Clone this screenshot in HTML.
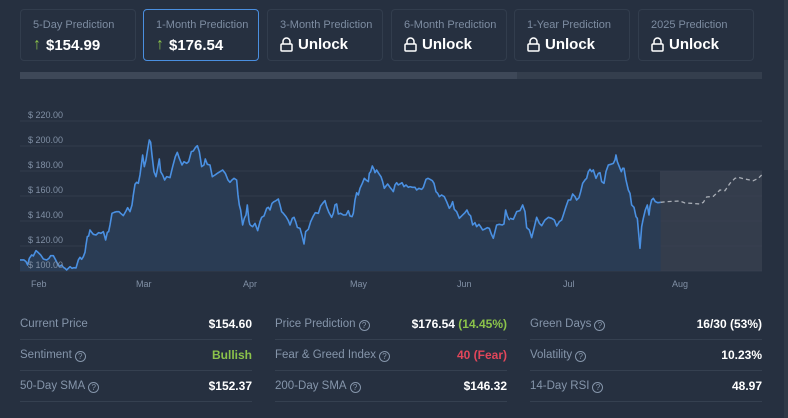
<!DOCTYPE html>
<html><head><meta charset="utf-8"><style>
*{box-sizing:border-box;margin:0;padding:0}
body{width:788px;height:418px;background:#263040;font-family:"Liberation Sans",sans-serif;position:relative;overflow:hidden}
.card{position:absolute;top:9px;width:116px;height:52px;border:1px solid #323d4d;border-radius:4px}
.card.sel{border-color:#4a8fe0}
.card .t{position:absolute;left:12px;top:9px;font-size:11px;color:#7d8ca1}
.card .v{position:absolute;left:12px;top:26px;font-size:15px;font-weight:bold;color:#fff;display:flex;align-items:center;gap:5px}
.ar{color:#8bc34a;font-weight:normal;font-size:16px}
.bar{position:absolute;left:20px;top:72px;width:742px;height:7px;background:#343e4d}
.bar i{position:absolute;left:0;top:0;width:497px;height:7px;background:#3e4858}
.sb{position:absolute;left:784px;top:0;width:4px;height:418px;background:#2f3947}
.sb i{position:absolute;left:0;top:60px;width:4px;height:110px;background:#3a4452}
.row{position:absolute;height:31px;border-bottom:1px solid #354050;font-size:11.5px;color:#8595aa;display:flex;justify-content:space-between;align-items:center}
.row b{color:#fff;font-size:12px}
.q{display:inline-block;width:11px;height:11px;border:1px solid #8595aa;border-radius:50%;font-size:8px;text-align:center;line-height:9px;margin-left:3px;vertical-align:-1px}
</style></head><body>
<div class="card" style="left:20px"><div class="t">5-Day Prediction</div><div class="v"><span class="ar">↑</span>$154.99</div></div>
<div class="card sel" style="left:143px"><div class="t">1-Month Prediction</div><div class="v"><span class="ar">↑</span>$176.54</div></div>
<div class="card" style="left:267px"><div class="t">3-Month Prediction</div><div class="v"><svg width="13" height="15" viewBox="0 0 13 15"><path d="M3 7V4.5a3.5 3.5 0 0 1 7 0V7" fill="none" stroke="#fff" stroke-width="1.5"/><rect x="1" y="7" width="11" height="7" rx="1" fill="none" stroke="#fff" stroke-width="1.5"/></svg>Unlock</div></div>
<div class="card" style="left:391px"><div class="t">6-Month Prediction</div><div class="v"><svg width="13" height="15" viewBox="0 0 13 15"><path d="M3 7V4.5a3.5 3.5 0 0 1 7 0V7" fill="none" stroke="#fff" stroke-width="1.5"/><rect x="1" y="7" width="11" height="7" rx="1" fill="none" stroke="#fff" stroke-width="1.5"/></svg>Unlock</div></div>
<div class="card" style="left:514px"><div class="t">1-Year Prediction</div><div class="v"><svg width="13" height="15" viewBox="0 0 13 15"><path d="M3 7V4.5a3.5 3.5 0 0 1 7 0V7" fill="none" stroke="#fff" stroke-width="1.5"/><rect x="1" y="7" width="11" height="7" rx="1" fill="none" stroke="#fff" stroke-width="1.5"/></svg>Unlock</div></div>
<div class="card" style="left:638px"><div class="t">2025 Prediction</div><div class="v"><svg width="13" height="15" viewBox="0 0 13 15"><path d="M3 7V4.5a3.5 3.5 0 0 1 7 0V7" fill="none" stroke="#fff" stroke-width="1.5"/><rect x="1" y="7" width="11" height="7" rx="1" fill="none" stroke="#fff" stroke-width="1.5"/></svg>Unlock</div></div>
<div class="bar"><i></i></div>
<div class="sb"><i></i></div>

<svg width="788" height="300" style="position:absolute;left:0;top:0" font-family="Liberation Sans, sans-serif">
<g stroke="#313c4c" stroke-width="1">
<line x1="20" x2="762" y1="121" y2="121"/><line x1="20" x2="762" y1="146" y2="146"/><line x1="20" x2="762" y1="171" y2="171"/><line x1="20" x2="762" y1="196" y2="196"/><line x1="20" x2="762" y1="221" y2="221"/><line x1="20" x2="762" y1="246" y2="246"/><line x1="20" x2="762" y1="271" y2="271"/>
</g>
<rect x="660" y="171" width="102" height="100" fill="#3a4250" opacity="0.75"/>
<g transform="translate(0,95) scale(0.3333)">
<polygon fill="#2a3c54" points="60,528 60,495 72,495 78,500 83,510 88,490 95,480 100,483 108,467 115,473 122,480 130,492 140,495 147,490 152,482 160,482 167,495 172,505 178,515 185,510 190,517 195,520 200,525 205,520 210,515 216,520 222,518 228,519 235,495 240,487 245,493 250,485 255,472 258,450 262,425 266,423 270,405 275,412 280,418 288,420 296,413 303,415 310,410 313,420 317,435 322,412 326,410 330,390 336,355 343,352 350,350 357,350 362,355 370,362 378,348 383,338 390,350 396,330 400,300 405,268 410,262 415,265 420,240 428,180 433,215 438,195 442,170 448,135 452,142 456,180 462,230 468,245 472,225 478,192 482,230 488,240 494,255 500,245 510,248 518,215 526,185 532,172 538,190 546,210 552,200 560,205 566,200 574,170 580,168 586,158 592,152 598,170 605,215 612,210 616,192 622,208 630,210 637,245 645,240 652,235 660,230 668,225 676,235 684,255 690,262 696,255 702,250 710,255 714,300 718,330 722,345 728,390 733,370 738,360 742,330 747,378 751,390 751,528"/>
<polyline fill="none" stroke="#4a90e2" stroke-width="1.6" vector-effect="non-scaling-stroke" stroke-linejoin="round" points="60,495 72,495 78,500 83,510 88,490 95,480 100,483 108,467 115,473 122,480 130,492 140,495 147,490 152,482 160,482 167,495 172,505 178,515 185,510 190,517 195,520 200,525 205,520 210,515 216,520 222,518 228,519 235,495 240,487 245,493 250,485 255,472 258,450 262,425 266,423 270,405 275,412 280,418 288,420 296,413 303,415 310,410 313,420 317,435 322,412 326,410 330,390 336,355 343,352 350,350 357,350 362,355 370,362 378,348 383,338 390,350 396,330 400,300 405,268 410,262 415,265 420,240 428,180 433,215 438,195 442,170 448,135 452,142 456,180 462,230 468,245 472,225 478,192 482,230 488,240 494,255 500,245 510,248 518,215 526,185 532,172 538,190 546,210 552,200 560,205 566,200 574,170 580,168 586,158 592,152 598,170 605,215 612,210 616,192 622,208 630,210 637,245 645,240 652,235 660,230 668,225 676,235 684,255 690,262 696,255 702,250 710,255 714,300 718,330 722,345 728,390 733,370 738,360 742,330 747,378 750,390"/>
</g>
<g transform="translate(250,130) scale(0.3333)">
<polygon fill="#2a3c54" points="0,423 0,285 8,290 15,280 23,302 30,275 35,262 42,258 50,235 55,232 60,240 66,220 72,215 78,212 85,207 90,225 95,245 100,250 108,260 115,272 120,285 127,265 132,262 137,275 142,292 150,295 157,320 162,342 167,305 175,298 182,275 190,258 196,248 205,250 212,228 218,220 225,212 230,230 237,248 245,262 250,250 255,225 260,222 265,252 272,250 280,255 288,255 295,242 300,258 306,260 310,250 315,210 320,188 325,195 330,175 337,160 343,145 348,150 355,155 358,130 362,125 367,108 372,118 375,128 380,120 386,130 393,140 398,155 403,175 408,168 413,162 420,172 425,178 430,185 435,165 440,158 445,165 450,162 456,158 462,170 468,165 475,172 480,170 487,172 495,172 500,180 507,175 515,178 520,172 528,148 534,145 540,148 547,152 552,160 558,185 563,190 568,200 575,195 583,200 590,215 598,235 603,228 608,215 613,238 620,245 628,265 635,258 640,253 645,248 651,240 656,252 662,258 668,285 675,278 680,290 687,283 692,290 698,300 705,297 712,293 718,295 724,312 730,325 735,305 740,285 748,283 757,285 762,282 767,240 772,258 777,268 783,270 791,272 791,423"/>
<polyline fill="none" stroke="#4a90e2" stroke-width="1.6" vector-effect="non-scaling-stroke" stroke-linejoin="round" points="0,285 8,290 15,280 23,302 30,275 35,262 42,258 50,235 55,232 60,240 66,220 72,215 78,212 85,207 90,225 95,245 100,250 108,260 115,272 120,285 127,265 132,262 137,275 142,292 150,295 157,320 162,342 167,305 175,298 182,275 190,258 196,248 205,250 212,228 218,220 225,212 230,230 237,248 245,262 250,250 255,225 260,222 265,252 272,250 280,255 288,255 295,242 300,258 306,260 310,250 315,210 320,188 325,195 330,175 337,160 343,145 348,150 355,155 358,130 362,125 367,108 372,118 375,128 380,120 386,130 393,140 398,155 403,175 408,168 413,162 420,172 425,178 430,185 435,165 440,158 445,165 450,162 456,158 462,170 468,165 475,172 480,170 487,172 495,172 500,180 507,175 515,178 520,172 528,148 534,145 540,148 547,152 552,160 558,185 563,190 568,200 575,195 583,200 590,215 598,235 603,228 608,215 613,238 620,245 628,265 635,258 640,253 645,248 651,240 656,252 662,258 668,285 675,278 680,290 687,283 692,290 698,300 705,297 712,293 718,295 724,312 730,325 735,305 740,285 748,283 757,285 762,282 767,240 772,258 777,268 783,270 790,272"/>
</g>
<g transform="translate(510,130) scale(0.3333)">
<polygon fill="#2a3c54" points="0,423 0,265 10,268 20,245 30,242 38,225 45,245 50,293 58,300 65,323 72,295 80,262 88,280 95,287 105,270 115,262 125,265 133,270 140,288 148,275 155,270 160,255 168,230 175,210 182,210 188,192 195,200 200,210 207,203 212,185 218,160 225,150 230,145 235,125 240,118 245,125 250,120 258,145 265,130 270,128 275,155 282,160 288,125 295,105 302,103 310,100 315,90 318,75 322,95 328,110 334,125 338,115 342,115 348,150 355,180 360,190 365,225 372,232 378,260 382,265 386,310 390,355 395,290 400,265 406,240 412,225 417,255 420,230 425,210 430,205 436,215 443,218 452,217 452,423"/>
<polyline fill="none" stroke="#4a90e2" stroke-width="1.6" vector-effect="non-scaling-stroke" stroke-linejoin="round" points="0,265 10,268 20,245 30,242 38,225 45,245 50,293 58,300 65,323 72,295 80,262 88,280 95,287 105,270 115,262 125,265 133,270 140,288 148,275 155,270 160,255 168,230 175,210 182,210 188,192 195,200 200,210 207,203 212,185 218,160 225,150 230,145 235,125 240,118 245,125 250,120 258,145 265,130 270,128 275,155 282,160 288,125 295,105 302,103 310,100 315,90 318,75 322,95 328,110 334,125 338,115 342,115 348,150 355,180 360,190 365,225 372,232 378,260 382,265 386,310 390,355 395,290 400,265 406,240 412,225 417,255 420,230 425,210 430,205 436,215 443,218 452,217"/>
<polyline fill="none" stroke="#a8adb5" stroke-width="1.3" stroke-dasharray="4 3" vector-effect="non-scaling-stroke" points="452,217 470,215 490,214 510,213 525,219 545,220 570,222 580,217 590,201 610,199 630,180 645,182 660,160 675,145 685,142 700,146 720,150 730,152 745,145 755,135"/>
</g>
<g font-size="9" fill="#8190a5">
<text x="28" y="118">$ 220.00</text><text x="28" y="143">$ 200.00</text><text x="28" y="168">$ 180.00</text><text x="28" y="193">$ 160.00</text><text x="28" y="218">$ 140.00</text><text x="28" y="243">$ 120.00</text><text x="28" y="268">$ 100.00</text>
<text x="31" y="287">Feb</text><text x="136" y="287">Mar</text><text x="243" y="287">Apr</text><text x="350" y="287">May</text><text x="457" y="287">Jun</text><text x="563" y="287">Jul</text><text x="672" y="287">Aug</text>
</g>
</svg>

<div class="row" style="left:20px;top:309px;width:232px"><span>Current Price</span><b>$154.60</b></div>
<div class="row" style="left:20px;top:340px;width:232px"><span>Sentiment<span class="q">?</span></span><b style="color:#8bc34a">Bullish</b></div>
<div class="row" style="left:20px;top:371px;width:232px"><span>50-Day SMA<span class="q">?</span></span><b>$152.37</b></div>
<div class="row" style="left:275px;top:309px;width:232px"><span>Price Prediction<span class="q">?</span></span><b>$176.54 <span style="color:#8bc34a">(14.45%)</span></b></div>
<div class="row" style="left:275px;top:340px;width:232px"><span>Fear &amp; Greed Index<span class="q">?</span></span><b style="color:#e2465a">40 (Fear)</b></div>
<div class="row" style="left:275px;top:371px;width:232px"><span>200-Day SMA<span class="q">?</span></span><b>$146.32</b></div>
<div class="row" style="left:530px;top:309px;width:232px"><span>Green Days<span class="q">?</span></span><b>16/30 (53%)</b></div>
<div class="row" style="left:530px;top:340px;width:232px"><span>Volatility<span class="q">?</span></span><b>10.23%</b></div>
<div class="row" style="left:530px;top:371px;width:232px"><span>14-Day RSI<span class="q">?</span></span><b>48.97</b></div>
</body></html>
